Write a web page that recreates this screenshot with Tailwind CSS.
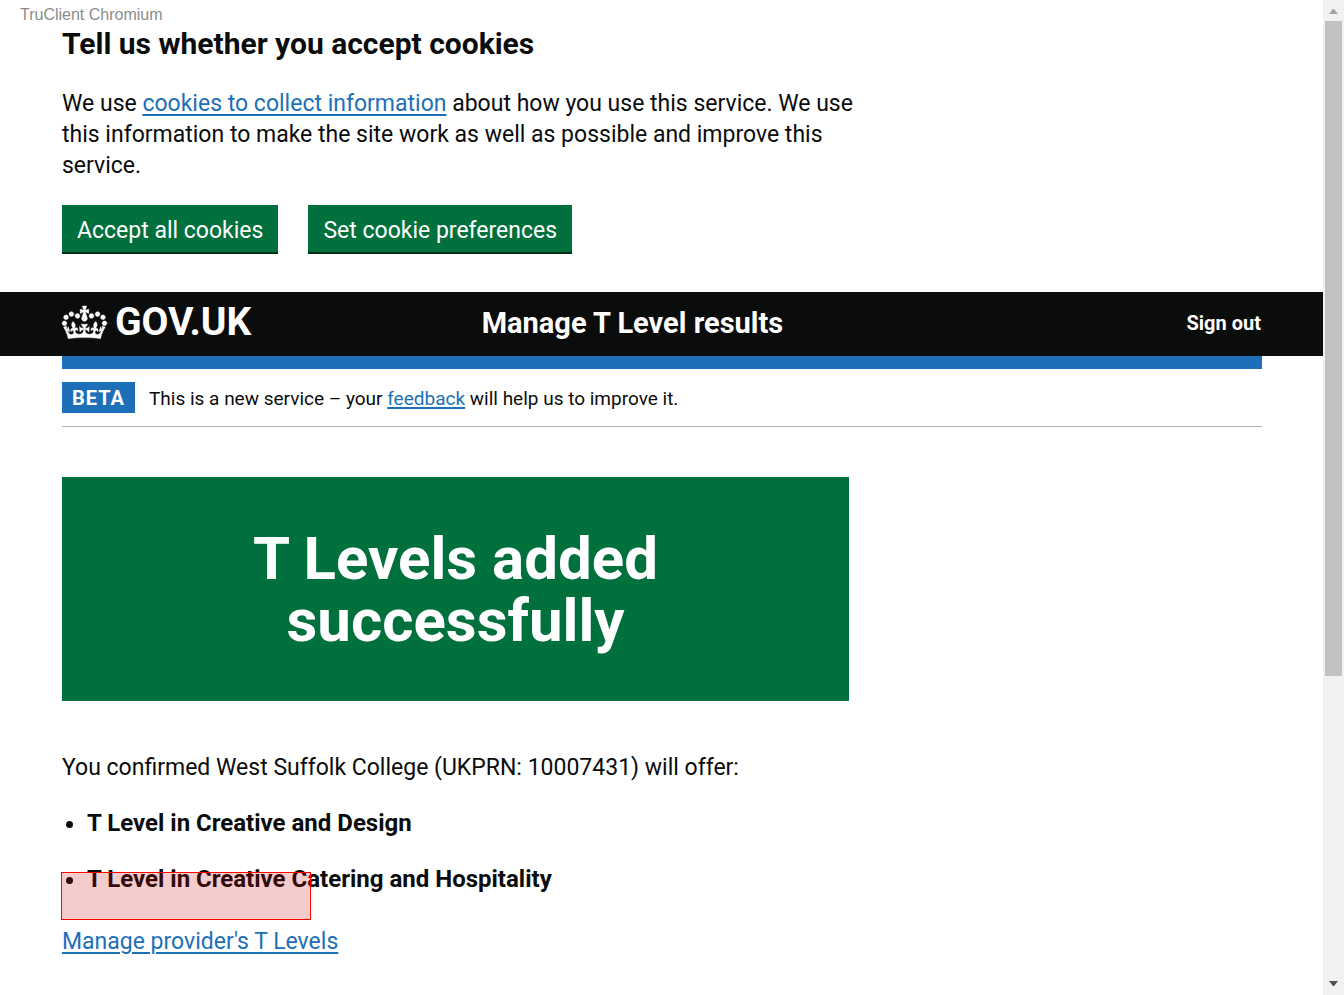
<!DOCTYPE html>
<html lang="en">
<head>
<meta charset="utf-8">
<meta name="viewport" content="width=device-width, initial-scale=1">
<title>T Levels added successfully - Manage T Level results</title>
<script src="https://cdn.jsdelivr.net/npm/@tailwindcss/browser@4"></script>
</head>
<body class="flex min-h-screen bg-white font-['Roboto','Liberation_Sans',sans-serif] text-[23px] leading-[31px] text-[#0b0c0c]">
<div class="min-w-0 flex-1">
  <p class="h-7 pl-5 font-['Liberation_Sans',sans-serif] text-base leading-[30px] text-[#8c8c8c]">TruClient Chromium</p>

  <section class="px-[62px] pb-[38px]" aria-labelledby="cookie-title">
    <div class="max-w-[796px]">
      <h2 id="cookie-title" class="text-3xl leading-8 font-bold">Tell us whether you accept cookies</h2>
      <p class="mt-7">We use <a href="#cookies" class="text-[#1d70b8] underline decoration-2 underline-offset-3">cookies to collect information</a> about how you use this service. We use this information to make the site work as well as possible and improve this service.</p>
      <div class="mt-6 flex flex-wrap gap-[30px]">
        <button type="button" class="h-[49px] border-b-2 border-[#002d18] bg-[#00703c] px-[15px] pt-[3px] text-white">Accept all cookies</button>
        <button type="button" class="h-[49px] border-b-2 border-[#002d18] bg-[#00703c] px-[15px] pt-[3px] text-white">Set cookie preferences</button>
      </div>
    </div>
  </section>

  <header class="bg-[#0b0c0c] text-white">
    <div class="flex h-16 items-center px-[62px] pb-[2px]">
      <div class="w-[35%]">
        <a href="#home" class="flex items-center gap-2 pb-[2px] text-[39px] font-bold">
          <svg class="h-[33px] w-[45px] shrink-0 overflow-visible" viewBox="0 0 132 97" fill="currentColor" stroke="currentColor" stroke-width="1.2" aria-hidden="true"><path d="M25 30.2c3.5 1.5 7.7-.2 9.1-3.7 1.5-3.6-.2-7.8-3.9-9.2-3.6-1.4-7.6.3-9.1 3.9-1.4 3.5.3 7.5 3.9 9zM9 39.5c3.6 1.5 7.8-.2 9.2-3.7 1.5-3.6-.2-7.8-3.9-9.1-3.6-1.5-7.6.2-9.1 3.8-1.4 3.5.3 7.5 3.8 9zM4.4 57.2c3.5 1.5 7.7-.2 9.1-3.8 1.5-3.6-.2-7.7-3.9-9.1-3.5-1.5-7.6.3-9.1 3.8-1.4 3.5.3 7.6 3.9 9.1zm38.3-21.4c3.5 1.5 7.7-.2 9.1-3.8 1.5-3.6-.2-7.7-3.9-9.1-3.6-1.5-7.6.3-9.1 3.8-1.3 3.6.4 7.7 3.9 9.1zm64.4-5.6c-3.6 1.5-7.8-.2-9.1-3.7-1.5-3.6.2-7.8 3.8-9.2 3.6-1.4 7.7.3 9.2 3.9 1.3 3.5-.4 7.5-3.9 9zm15.9 9.3c-3.6 1.5-7.7-.2-9.1-3.7-1.5-3.6.2-7.8 3.7-9.1 3.6-1.5 7.7.2 9.2 3.8 1.5 3.5-.3 7.5-3.8 9zm4.7 17.7c-3.6 1.5-7.8-.2-9.2-3.8-1.5-3.6.2-7.7 3.9-9.1 3.6-1.5 7.7.3 9.2 3.8 1.3 3.5-.4 7.6-3.9 9.1zM89.3 35.8c-3.6 1.5-7.8-.2-9.2-3.8-1.4-3.6.2-7.7 3.9-9.1 3.6-1.5 7.7.3 9.2 3.8 1.4 3.6-.3 7.7-3.9 9.1zM69.7 17.7l8.9 4.7V9.3l-8.9 2.8c-.2-.3-.5-.6-.9-.9L72.4 0H59.6l3.5 11.2c-.3.3-.6.5-.9.9l-8.8-2.8v13.1l8.8-4.7c.3.3.6.7.9.9l-5 15.4v.1c-.2.8-.4 1.6-.4 2.4 0 4.1 3.1 7.5 7 8.1h.2c.3 0 .7.1 1 .1.4 0 .7 0 1-.1h.2c4-.6 7.1-4.1 7.1-8.1 0-.8-.1-1.7-.4-2.4V34l-5.1-15.4c.4-.2.7-.6 1-.9zM66 92.8c16.9 0 32.8 1.1 47.1 3.2 4-16.9 8.9-26.7 14-33.5l-9.6-3.4c1 4.9 1.1 7.2 0 10.2-1.5-1.4-3-4.3-4.2-8.7L108.6 76c2.8-2 5-3.2 7.5-3.3-4.4 9.4-10 11.9-13.6 11.2-4.3-.8-6.3-4.6-5.6-7.9 1-4.7 5.7-5.9 8-.5 4.3-8.7-3-11.4-7.6-8.8 7.1-7.2 7.9-13.5 2.1-21.1-8 6.1-8.1 12.3-4.5 20.8-4.7-5.4-12.1-2.5-9.5 6.2 3.4-5.2 7.9-2 7.2 3.1-.6 4.3-6.4 7.8-13.5 7.2-10.3-.9-10.9-8-11.2-13.8 2.5-.5 7.1 1.8 11 7.3L80.2 60c-4.1 4.4-8 5.3-12.3 5.4 1.4-4.4 8-11.6 8-11.6H55.5s6.4 7.2 7.9 11.6c-4.2-.1-8-1-12.3-5.4l1.4 16.4c3.9-5.5 8.5-7.7 10.9-7.3-.3 5.8-.9 12.8-11.1 13.8-7.2.6-12.9-2.9-13.5-7.2-.7-5 3.8-8.3 7.1-3.1 2.7-8.7-4.6-11.6-9.4-6.2 3.7-8.5 3.6-14.7-4.6-20.8-5.8 7.6-5 13.9 2.2 21.1-4.7-2.6-11.9.1-7.7 8.8 2.3-5.5 7.1-4.2 8.1.5.7 3.3-1.3 7.1-5.7 7.9-3.5.7-9-1.8-13.5-11.2 2.5.1 4.7 1.3 7.5 3.3l-4.7-15.4c-1.2 4.4-2.7 7.2-4.3 8.7-1.1-3-.9-5.3 0-10.2l-9.5 3.4c5 6.9 9.9 16.7 14 33.5 14.8-2.1 30.8-3.2 47.7-3.2z"/></svg>
          GOV.UK
        </a>
      </div>
      <a href="#service" class="text-[29px] font-bold">Manage T Level results</a>
      <a href="#sign-out" class="ml-auto text-xl font-bold">Sign out</a>
    </div>
  </header>

  <main class="pr-[61px] pb-9 pl-[62px]">
    <div class="h-[13px] bg-[#1d70b8]"></div>
    <div class="mt-[13px] flex items-center gap-[14px] border-b border-[#b1b4b6] pb-[13px] text-[19px] leading-[29px]">
      <strong class="bg-[#1d70b8] px-[10px] pt-[2px] text-xl leading-[29px] font-bold tracking-wider text-white">BETA</strong>
      <p class="pt-[2px]">This is a new service – your <a href="#feedback" class="text-[#1d70b8] underline decoration-2 underline-offset-2">feedback</a> will help us to improve it.</p>
    </div>

    <div class="mt-[50px] max-w-[787px] bg-[#00703c] pt-[51px] pb-[49px] text-center text-white">
      <h1 class="mx-auto max-w-[500px] text-6xl leading-[62px] font-bold">T Levels added successfully</h1>
    </div>

    <p class="mt-[51px]">You confirmed West Suffolk College (UKPRN: 10007431) will offer:</p>
    <ul class="mt-[25px] flex list-disc flex-col gap-[25px] pl-[25px] text-2xl leading-[31px] font-bold">
      <li>T Level in Creative and Design</li>
      <li class="relative">T Level in Creative Catering and Hospitality
        <span class="absolute top-2 -left-[26px] h-12 w-[250px] border border-[#ff0000] bg-[#c80000]/20" aria-hidden="true"></span>
      </li>
    </ul>
    <p class="mt-[31px]"><a href="#provider" class="text-[#1d70b8] underline decoration-2 underline-offset-3">Manage provider's T Levels</a></p>
  </main>
</div>

<div class="sticky top-0 flex h-screen w-[21px] shrink-0 flex-col items-center bg-[#f1f1f1]" aria-hidden="true">
  <svg class="h-[21px] w-[21px] shrink-0" viewBox="0 0 21 21" fill="#a3a3a3"><path d="M6 14h9L11 9h-1z"/></svg>
  <div class="flex min-h-0 w-[17px] flex-1 flex-col"><div class="h-[655px] bg-[#c1c1c1]"></div></div>
  <svg class="h-[21px] w-[21px] shrink-0" viewBox="0 0 21 21" fill="#505050"><path d="M6 7h9l-4 5h-1z"/></svg>
</div>
</body>
</html>
